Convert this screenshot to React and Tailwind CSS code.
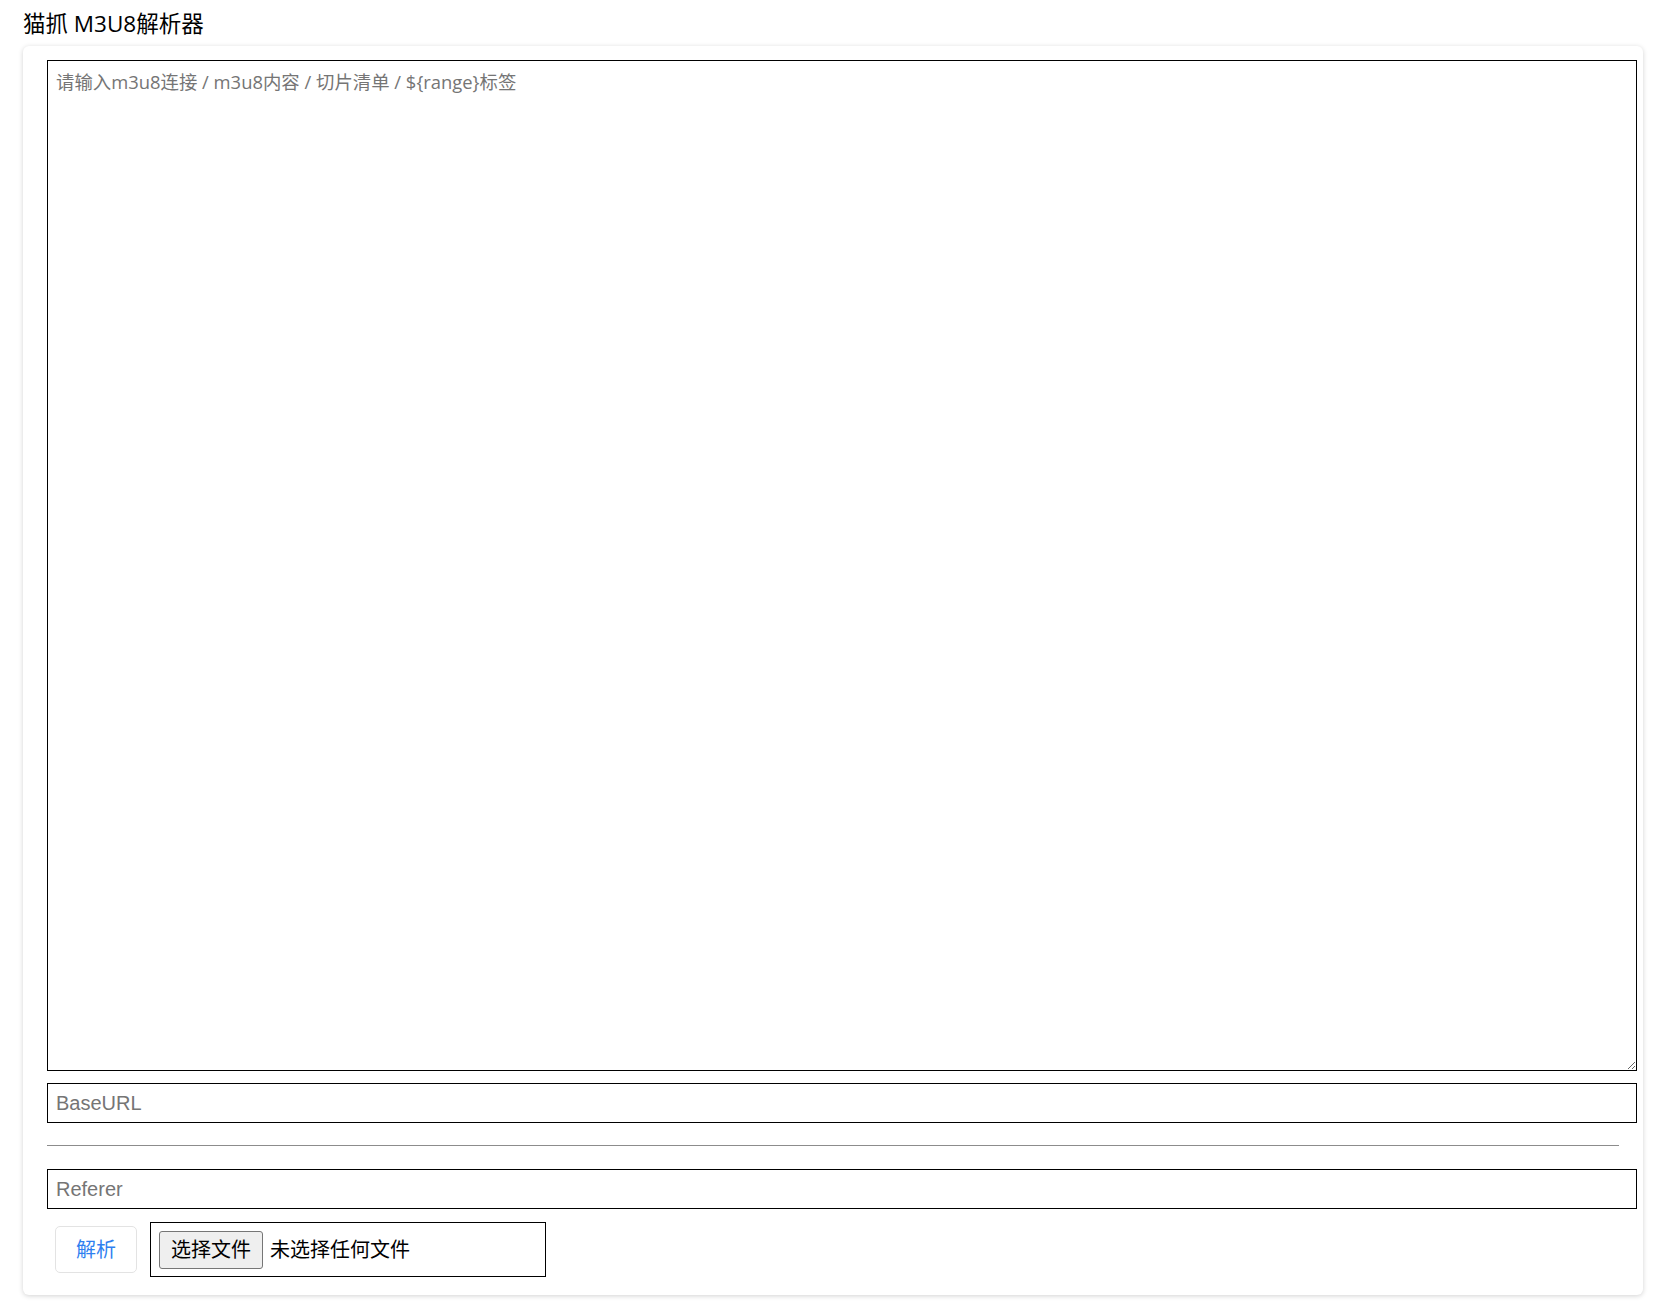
import React from 'react';

const latin = "font-['Liberation_Sans','Noto_Sans_CJK_SC',sans-serif]";
const ui = "font-['Open_Sans','Noto_Sans_CJK_SC',sans-serif]";

export default function App() {
  const [text, setText] = React.useState('');
  const [baseUrl, setBaseUrl] = React.useState('');
  const [referer, setReferer] = React.useState('');

  return (
    <div className={`min-h-screen bg-white pl-[23px] pr-[16px] ${latin}`}>
      <div className={`pt-[9px] h-[46px] text-[22.5px] leading-[30px] text-black ${ui}`}>猫抓 M3U8解析器</div>

      <div className="rounded-[6px] bg-white shadow-[0_1px_5px_rgba(0,0,0,0.18)] pt-[14px] pb-[18px] px-[24px]">
        <textarea
          value={text}
          onChange={(e) => setText(e.target.value)}
          placeholder="请输入m3u8连接 / m3u8内容 / 切片清单 / ${range}标签"
          className={`block box-content w-full h-[993px] p-2 border border-black text-[18.4px] leading-[26px] text-black placeholder:text-[#757575] outline-none resize ${ui}`}
        />

        <input
          value={baseUrl}
          onChange={(e) => setBaseUrl(e.target.value)}
          placeholder="BaseURL"
          className="block box-content w-full h-[24px] mt-[12px] px-2 py-[7px] border border-black text-[20px] leading-[24px] placeholder:text-[#757575] outline-none"
        />

        <hr className="mt-[22px] mb-[23px] border-0 border-t border-[#8c8c8c]" />

        <input
          value={referer}
          onChange={(e) => setReferer(e.target.value)}
          placeholder="Referer"
          className="block box-content w-full h-[24px] px-2 py-[7px] border border-black text-[20px] leading-[24px] placeholder:text-[#757575] outline-none"
        />

        <div className="mt-[13px] flex items-center pl-[8px] gap-[13px]">
          <button className="w-[82px] h-[47px] rounded-[5px] border border-[#e3e3e3] bg-white text-[20px] text-[#2f7ff0]">
            解析
          </button>

          {/* file picker, drawn as a box so the labels stay in Chinese */}
          <label className="w-[396px] h-[55px] flex items-center gap-[7px] border border-black px-2 cursor-pointer">
            <span className="h-[38px] px-[11px] flex items-center rounded-[3px] border border-[#767676] bg-[#efefef] text-[20px] text-black">
              选择文件
            </span>
            <span className="text-[20px] text-black">未选择任何文件</span>
            <input type="file" className="hidden" />
          </label>
        </div>
      </div>
    </div>
  );
}
